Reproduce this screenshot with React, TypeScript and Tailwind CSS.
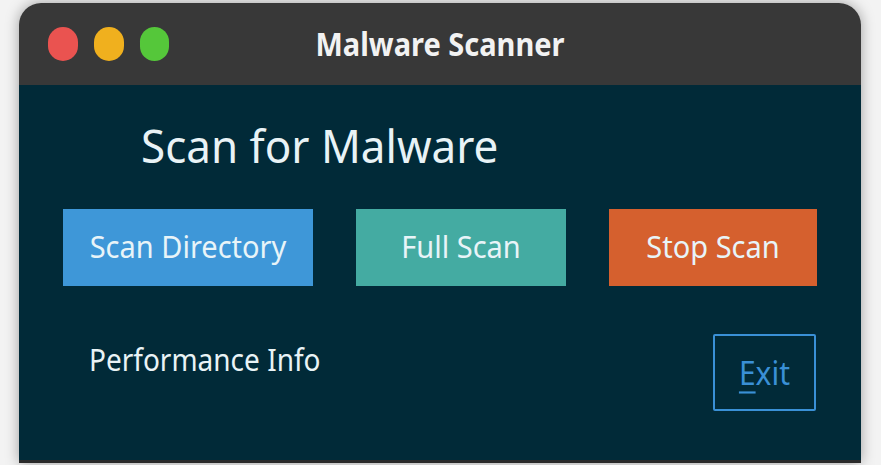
import React from "react";

const font = { fontFamily: '"Noto Sans", "DejaVu Sans", sans-serif' };

const ActionButton = ({ label, className }: { label: string; className: string }) => {
  return (
    <button className={`h-[77px] flex items-center justify-center pb-[4px] text-[29px] text-[#e8f4f8] ${className}`}>
      <span className="inline-block scale-y-[1.08]">{label}</span>
    </button>
  );
};

export default function App() {
  return (
    <div className="w-[881px] h-[465px] bg-[#f3f3f3] overflow-hidden" style={font}>
      <div className="ml-[19px] mt-[3px] w-[842px] h-[460px] flex flex-col rounded-t-[22px] overflow-hidden shadow-[0_0_14px_rgba(0,0,0,0.35)] border-b-[3px] border-[#2a2a2a]">
        <div className="h-[82px] bg-[#383838] flex items-center relative">
          <div className="flex items-center gap-[16px] pl-[29px]">
            <span className="w-[30px] h-[34px] rounded-full bg-[#ea5350]" />
            <span className="w-[30px] h-[34px] rounded-full bg-[#f0b01e]" />
            <span className="w-[29px] h-[34px] rounded-full bg-[#55c73a]" />
          </div>
          <div className="absolute inset-0 flex items-center justify-center">
            <span className="inline-block scale-y-[1.12] text-[29px] font-bold text-[#f2f2f2]">Malware Scanner</span>
          </div>
        </div>
        <div className="flex-1 bg-[#012a38] flex flex-col">
          <div className="pl-[122px] pt-[30px] h-[124px]">
            <span className="inline-block scale-y-[1.04] text-[44px] leading-[60px] text-[#e9f3f6]">Scan for Malware</span>
          </div>
          <div className="flex justify-between px-[44px]">
            <ActionButton label="Scan Directory" className="w-[250px] bg-[#3e97d8]" />
            <ActionButton label="Full Scan" className="w-[210px] bg-[#44aba2]" />
            <ActionButton label="Stop Scan" className="w-[208px] bg-[#d5602e]" />
          </div>
          <div className="flex justify-between items-start pl-[70px] pr-[45px] pt-[48px]">
            <span className="inline-block scale-y-[1.08] text-[28px] leading-[40px] text-[#e9f3f6] mt-[5px]">Performance Info</span>
            <button className="w-[103px] h-[77px] border-2 border-[#3a90d6] rounded-[2px] flex items-center justify-center text-[30px] text-[#3a90d6]">
              <span className="inline-block scale-y-[1.08]">
                <span className="underline underline-offset-[6px] decoration-2">E</span>xit
              </span>
            </button>
          </div>
        </div>
      </div>
    </div>
  );
}
